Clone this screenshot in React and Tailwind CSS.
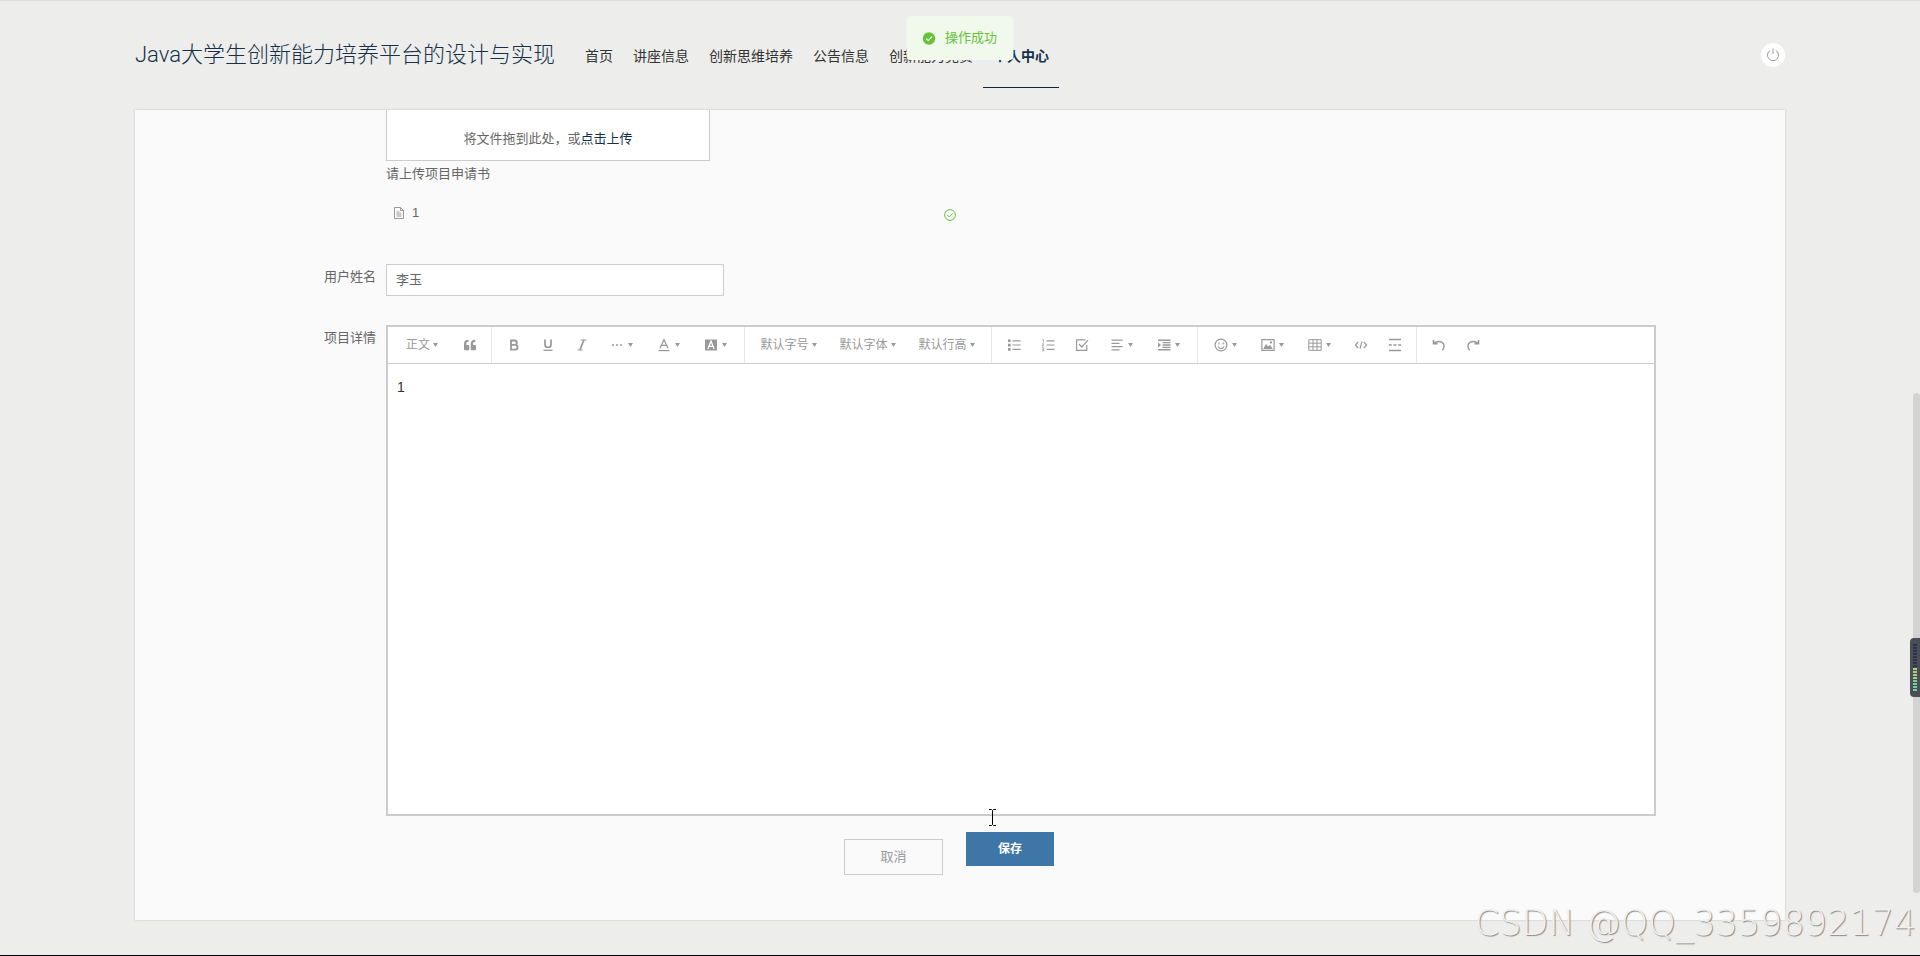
import { useState } from 'react'
import { FaQuoteLeft } from 'react-icons/fa'

const navItems = ['首页', '讲座信息', '创新思维培养', '公告信息', '创新能力竞赛', '个人中心']
const meter = Array.from({ length: 16 }, (_, i) => i)

const Svg = ({ children }) => (
  <svg width="14" height="14" viewBox="0 0 14 14" fill="none" stroke="currentColor" strokeWidth="1.2" aria-hidden="true" className="shrink-0">{children}</svg>
)

const Caret = () => (
  <svg width="5" height="4" viewBox="0 0 5 4" fill="currentColor" aria-hidden="true" className="shrink-0 pointer-events-none"><path d="M0 0h5L2.5 4z" /></svg>
)

const icons = {
  quote: <FaQuoteLeft size={12} aria-hidden="true" />,
  bold: <Svg><path d="M4 2.5h3.6a2.2 2.2 0 0 1 0 4.4H4zM4 6.9h4.2a2.3 2.3 0 0 1 0 4.7H4z" strokeWidth="1.8" /></Svg>,
  underline: <Svg><path d="M4 1.5v5a3 3 0 0 0 6 0v-5" strokeWidth="1.7" /><path d="M2.5 12.3h9" strokeWidth="1.3" /></Svg>,
  italic: <Svg><path d="M5.5 2h6M2.5 12h5" strokeWidth="1" /><path d="M8.8 2 5 12" strokeWidth="1.8" /></Svg>,
  more: <Svg><path d="M2 7h2M6 7h2M10 7h2" strokeWidth="1.6" /></Svg>,
  color: <Svg><path d="M3 10.3 7 1.7l4 8.6M4.4 7.4h5.2" /><path d="M1.5 12.6h11" /></Svg>,
  bgColor: <Svg><path d="M1 1.5h12v11H1z" fill="currentColor" stroke="none" /><path d="M3.8 11 7 3.2l3.2 7.8M5 8.3h4" stroke="#fff" /></Svg>,
  bullets: <Svg><path d="M1 1.5h2.6v2.6H1zM1 5.8h2.6v2.6H1zM1 10.1h2.6v2.6H1z" fill="currentColor" stroke="none" /><path d="M5.5 2.8h8M5.5 7h8M5.5 11.4h8" /></Svg>,
  numbers: <Svg><path d="M5.5 2.8h8M5.5 7h8M5.5 11.4h8" /><path d="M1.4 1.6h1v3M1 5.8h1.8L1.2 8h1.8M1 9.8h1.7v3.1H1M1.2 11.3h1.5" strokeWidth="0.8" /></Svg>,
  todo: <Svg><path d="M11.8 7v5.4H1.6V1.8h9" /><path d="m4 6 2.8 3L13 2.2" /></Svg>,
  align: <Svg><path d="M1.5 2.2h11M1.5 5.4h8M1.5 8.6h11M1.5 11.8h8" /></Svg>,
  indent: <Svg><path d="M1 2.2h12.5M5.5 4.6h8M5.5 7h8M5.5 9.4h8M1 11.8h12.5" strokeWidth="1.4" /><path d="m1 4.4 3 2.6-3 2.6z" fill="currentColor" stroke="none" /></Svg>,
  emoji: <Svg><circle cx="7" cy="7" r="5.9" /><path d="M4.9 4.4v2M9.1 4.4v2" /><path d="M4 8.5a3.2 3.2 0 0 0 6 0" /></Svg>,
  image: <Svg><path d="M.9 1.7h12.2v10.6H.9z" /><path d="M2.2 11 5 6l2 2.6L9.2 7l2.6 4z" fill="currentColor" stroke="none" /><circle cx="10" cy="4.4" r="1.1" fill="currentColor" stroke="none" /></Svg>,
  table: <Svg><path d="M.8 1.7h12.4v10.6H.8zM.8 5.2h12.4M.8 8.8h12.4M5 1.7v10.6M9 1.7v10.6" strokeWidth="1" /></Svg>,
  code: <Svg><path d="M4.2 4 1.4 7l2.8 3M9.8 4l2.8 3-2.8 3M8 3.4 6 10.6" /></Svg>,
  divider: <Svg><path d="M1 1.5h12M1 12.5h12M.8 7h3M5.5 7h3M10.2 7h3" strokeWidth="1.3" /></Svg>,
  undo: <Svg><path d="M1.5 2v3.6h4" strokeWidth="1.6" /><path d="M2 5.3c4-3.2 10-2 10 3.2 0 1.6-.6 2.8-1.6 3.8" strokeWidth="1.4" /></Svg>,
  redo: <Svg><path d="M12.5 2v3.6h-4" strokeWidth="1.6" /><path d="M12 5.3C8 2.1 2 3.3 2 8.5c0 1.6.6 2.8 1.6 3.8" strokeWidth="1.4" /></Svg>,
}

const groups = [
  [{ text: '正文', width: 'w-[60px]', box: 'w-6' }, { icon: 'quote', title: '引用' }],
  [{ icon: 'bold', title: '粗体' }, { icon: 'underline', title: '下划线' }, { icon: 'italic', title: '斜体' }, { icon: 'more', title: '更多', drop: true }, { icon: 'color', title: '文字颜色', drop: true }, { icon: 'bgColor', title: '背景色', drop: true }],
  [{ text: '默认字号', width: 'w-[79px]', box: 'w-12' }, { text: '默认字体', width: 'w-[79px]', box: 'w-12' }, { text: '默认行高', width: 'w-[79px]', box: 'w-12' }],
  [{ icon: 'bullets', title: '无序列表' }, { icon: 'numbers', title: '有序列表' }, { icon: 'todo', title: '待办' }, { icon: 'align', title: '对齐', drop: true }, { icon: 'indent', title: '缩进', drop: true }],
  [{ icon: 'emoji', title: '表情', drop: true }, { icon: 'image', title: '图片', drop: true }, { icon: 'table', title: '表格', drop: true }, { icon: 'code', title: '代码块' }, { icon: 'divider', title: '分割线' }],
  [{ icon: 'undo', title: '撤销' }, { icon: 'redo', title: '重做' }],
]

function ToolItem({ item }) {
  if (item.text) {
    return (
      <label className={`${item.width} flex items-center justify-center gap-[3px] pr-[2px]`}>
        <select aria-label={item.text} className={`${item.box} appearance-none bg-transparent text-xs outline-none`}><option>{item.text}</option></select>
        <Caret />
      </label>
    )
  }
  return (
    <button type="button" title={item.title} className={`${item.drop ? 'w-[47px] pr-[2px]' : 'w-[34px]'} flex items-center justify-center gap-1`}>
      {icons[item.icon]}{item.drop && <Caret />}
    </button>
  )
}

function Editor() {
  const [content, setContent] = useState('1')
  return (
    <div className="border-2 border-[#ccc] bg-white flex flex-col h-[491px]">
      <div className="flex h-[37px] border-b border-[#ccc] text-[#999]">
        {groups.map((g, i) => (
          <div key={i} className="flex pl-[5px] pr-1 border-r border-[#e8e8e8] last:border-r-0">
            {g.map((item) => <ToolItem key={item.icon || item.text} item={item} />)}
          </div>
        ))}
      </div>
      <textarea id="detail" value={content} onChange={(e) => setContent(e.target.value)} className="flex-1 resize-none outline-none px-[9px] py-[11px] text-sm leading-6 text-[#333]" />
    </div>
  )
}

function Header() {
  return (
    <header className="h-[110px] px-[135px] pb-[2px] flex items-center border-t border-[#dcdcda]">
      <h1 className="text-[22px] font-light text-[#16304a] whitespace-nowrap font-[Roboto,'Noto_Sans_CJK_SC',sans-serif]">Java大学生创新能力培养平台的设计与实现</h1>
      <nav className="flex ml-5 text-sm text-[#333] whitespace-nowrap">
        {navItems.map((n) => (
          <a key={n} href="#" className={n === '个人中心' ? 'px-[10px] h-[66px] leading-[68px] border-b border-[#0f2540] text-[#16304a] font-bold' : 'px-[10px] h-[66px] leading-[68px]'}>{n}</a>
        ))}
      </nav>
      <button type="button" title="退出" className="ml-auto w-6 h-6 rounded-full bg-white flex items-center justify-center text-[#999]">
        <Svg><path d="M4.3 2.3a5.5 5.5 0 1 0 5.4 0M7 .5v5.5" strokeWidth="1" /></Svg>
      </button>
    </header>
  )
}

export default function App() {
  const [name, setName] = useState('李玉')
  return (
    <div className="relative min-h-screen overflow-hidden bg-[#ededeb] border-b border-black font-['Liberation_Sans','Noto_Sans_CJK_SC',sans-serif] text-[13px] text-[#666]">
      <Header />
      <main className="mx-[135px] pb-[45px] bg-[#fafafa] shadow-[0_0_2px_rgba(0,0,0,0.2)] pr-[129px]">
        <form onSubmit={(e) => e.preventDefault()}>
          <div className="pl-[251px]">
            <div className="w-[324px] h-[51px] bg-white border-x border-b border-[#ccc] flex items-center justify-center pt-2">
              <span>将文件拖到此处，或</span><button type="button" className="text-[#16304a]">点击上传</button>
            </div>
            <p className="leading-[26px]">请上传项目申请书</p>
            <div className="mt-3 w-[570px] h-7 flex items-center pl-[7px]">
              <svg width="12" height="12" viewBox="0 0 12 12" fill="none" stroke="#999" aria-hidden="true"><path d="M1.5.5h6l3 3v8h-9zM7.5.5v3h3M3.5 5h3M3.5 7h5M3.5 9h5" /></svg>
              <span className="ml-[7px]">1</span>
              <svg width="12" height="12" viewBox="0 0 12 12" fill="none" stroke="#67c23a" aria-hidden="true" className="ml-auto mt-1"><circle cx="6" cy="6" r="5.4" /><path d="m3.3 6 2 2 3.4-3.6" /></svg>
            </div>
          </div>
          <div className="mt-[37px] flex">
            <label htmlFor="name" className="w-[251px] pr-[10px] text-right leading-[26px]">用户姓名</label>
            <input id="name" value={name} onChange={(e) => setName(e.target.value)} className="w-[338px] h-8 px-[9px] pb-[3px] bg-white border border-[#ccc] outline-none" />
          </div>
          <div className="mt-[29px] flex">
            <label htmlFor="detail" className="w-[251px] shrink-0 pr-[10px] text-right leading-[26px]">项目详情</label>
            <div className="flex-1 min-w-0"><Editor /></div>
          </div>
          <div className="mt-4 pl-[107px] flex justify-center items-start gap-[23px]">
            <button type="button" className="mt-[7px] w-[99px] h-9 border border-[#ccc] text-[#999]">取消</button>
            <button type="submit" className="w-[88px] h-[34px] bg-[#3f76a8] text-white text-xs font-bold">保存</button>
          </div>
        </form>
      </main>

      <div role="alert" className="absolute top-4 left-1/2 -translate-x-1/2 w-[107px] h-11 bg-[#f0f9eb] rounded-sm flex items-center justify-center gap-[9px] text-[#67c23a] whitespace-nowrap">
        <svg width="13" height="13" viewBox="0 0 13 13" aria-hidden="true"><circle cx="6.5" cy="6.5" r="6.2" fill="#67c23a" /><path d="m3.6 6.6 2.2 2.1 3.7-4" fill="none" stroke="#fff" strokeWidth="1.2" /></svg>
        操作成功
      </div>

      <svg width="7" height="17" viewBox="0 0 7 17" fill="none" stroke="#000" aria-hidden="true" className="absolute left-[989px] top-[809px]"><path d="M0 .5h2.5l1 1 1-1H7M3.5 1.5v14M0 16.5h2.5l1-1 1 1H7" /></svg>

      <div className="absolute right-0 top-[393px] w-[7px] h-[500px] bg-[#d3d3d3] rounded-full" />
      <div className="absolute right-0 top-[638px] w-[10px] h-[59px] rounded-l bg-[#4b4e57] flex flex-col items-center justify-center gap-px">
        {meter.map((i) => <span key={i} className={i < 8 ? 'w-1 h-[2px] bg-[#2e3150]' : i < 12 ? 'w-1 h-[2px] bg-[#a5d678]' : 'w-1 h-[2px] bg-[#6fcf9b]'} />)}
      </div>
      <div className="absolute right-[4px] bottom-[10px] font-['DejaVu_Sans',sans-serif] font-extralight text-[35px] leading-[44px] text-[#f0f0f0] [text-shadow:1px_1px_1px_#888] whitespace-nowrap">CSDN @QQ_3359892174</div>
    </div>
  )
}
